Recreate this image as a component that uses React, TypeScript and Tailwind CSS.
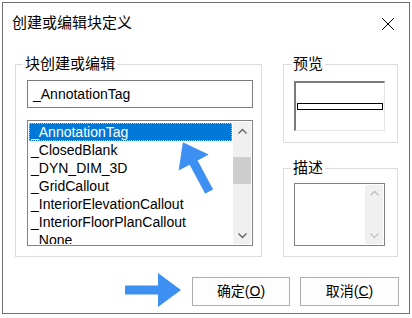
import React from "react";

const font = { fontFamily: '"Liberation Sans", "Noto Sans CJK SC", sans-serif' };

const items = [
  "_AnnotationTag",
  "_ClosedBlank",
  "_DYN_DIM_3D",
  "_GridCallout",
  "_InteriorElevationCallout",
  "_InteriorFloorPlanCallout",
  "_None",
];

const Chevron = ({ up, className }: { up?: boolean; className?: string }) => (
  <svg width="9" height="6" viewBox="0 0 9 6" className={className}>
    <path
      d={up ? "M0.5 5.5 L4.5 1.5 L8.5 5.5" : "M0.5 0.5 L4.5 4.5 L8.5 0.5"}
      fill="none"
      stroke="currentColor"
      strokeWidth="1.3"
    />
  </svg>
);

const BlueArrow = ({ className }: { className?: string }) => (
  <svg width="56" height="34" viewBox="0 0 56 34" className={className}>
    <path d="M0 12.5 H33 V0 L56 17 L33 34 V21.5 H0 Z" fill="#3d8ff2" />
  </svg>
);

const Group = ({
  label,
  className,
  children,
}: {
  label: string;
  className: string;
  children: React.ReactNode;
}) => (
  <div className={`relative border border-[#dcdcdc] ${className}`}>
    <span className="absolute -top-[11px] left-[7px] bg-white px-[2px] text-[15px] leading-[20px] text-black">
      {label}
    </span>
    {children}
  </div>
);

export default function App() {
  return (
    <div className="relative h-[318px] w-[412px] bg-white pl-[2px] pt-[2px]" style={font}>
      <div className="flex h-[312px] w-[408px] flex-col border border-[#707070]">
        <header className="flex h-[41px] items-center justify-between pl-[9px] pr-[14px]">
          <span className="text-[15px] text-black">创建或编辑块定义</span>
          <svg width="14" height="14" viewBox="0 0 14 14">
            <path d="M1 1 L13 13 M13 1 L1 13" stroke="#000" strokeWidth="1" />
          </svg>
        </header>

        <div className="flex pl-[12px] pt-[20px]">
          <Group label="块创建或编辑" className="h-[193px] w-[247px] pl-[11px] pt-[15px]">
            <div className="flex h-[28px] w-[226px] items-center border border-[#7a7a7a] pl-[5px] text-[14px] text-black">
              _AnnotationTag
            </div>
            <div className="mt-[12px] flex h-[126px] w-[226px] border border-[#828282] p-[1px]">
              <ul className="flex-1 overflow-hidden pt-[1px] text-[14px] text-black">
                {items.map((it, i) => (
                  <li
                    key={it}
                    className={
                      i === 0
                        ? "flex h-[18px] items-center border border-dotted border-[#9ec8ee] bg-[#0078d7] pl-[1px] text-white"
                        : "flex h-[18px] items-center pl-[2px]"
                    }
                  >
                    {it}
                  </li>
                ))}
              </ul>
              <div className="ml-[1px] flex w-[18px] flex-col bg-[#f0f0f0] text-[#606060]">
                <div className="flex h-[17px] items-center justify-center">
                  <Chevron up />
                </div>
                <div className="mt-[18px] h-[27px] bg-[#cdcdcd]" />
                <div className="flex-1" />
                <div className="flex h-[17px] items-center justify-center">
                  <Chevron />
                </div>
              </div>
            </div>
          </Group>

          <div className="ml-[21px] flex flex-col gap-[25px]">
            <Group label="预览" className="h-[79px] w-[115px] pl-[10px] pt-[16px]">
              <div className="flex h-[50px] w-[91px] items-center border-l-2 border-t-2 border-b border-r border-l-[#7b7b7b] border-t-[#7b7b7b] border-b-[#e3e3e3] border-r-[#e3e3e3] pl-[1px]">
                <div className="h-[7px] w-[86px] border border-black bg-white" />
              </div>
            </Group>
            <Group label="描述" className="h-[89px] w-[115px] pl-[10px] pt-[14px]">
              <div className="flex h-[63px] w-[91px] justify-end border border-[#828282] p-[1px]">
                <div className="flex w-[18px] flex-col justify-between bg-[#f0f0f0] py-[5px] text-[#c2c2c2]">
                  <div className="flex justify-center">
                    <Chevron up />
                  </div>
                  <div className="flex justify-center">
                    <Chevron />
                  </div>
                </div>
              </div>
            </Group>
          </div>
        </div>

        <div className="flex justify-end gap-[10px] pr-[10px] pt-[20px]">
          <button className="flex h-[29px] w-[98px] items-center justify-center border border-[#adadad] bg-[#fdfdfd] text-[14px] text-black">
            确定(<span className="underline">O</span>)
          </button>
          <button className="flex h-[29px] w-[99px] items-center justify-center border border-[#adadad] bg-[#fdfdfd] text-[14px] text-black">
            取消(<span className="underline">C</span>)
          </button>
        </div>
      </div>

      <BlueArrow className="absolute left-[125px] top-[273px]" />
      <BlueArrow className="absolute left-[168px] top-[150px] rotate-[-118deg]" />
    </div>
  );
}
